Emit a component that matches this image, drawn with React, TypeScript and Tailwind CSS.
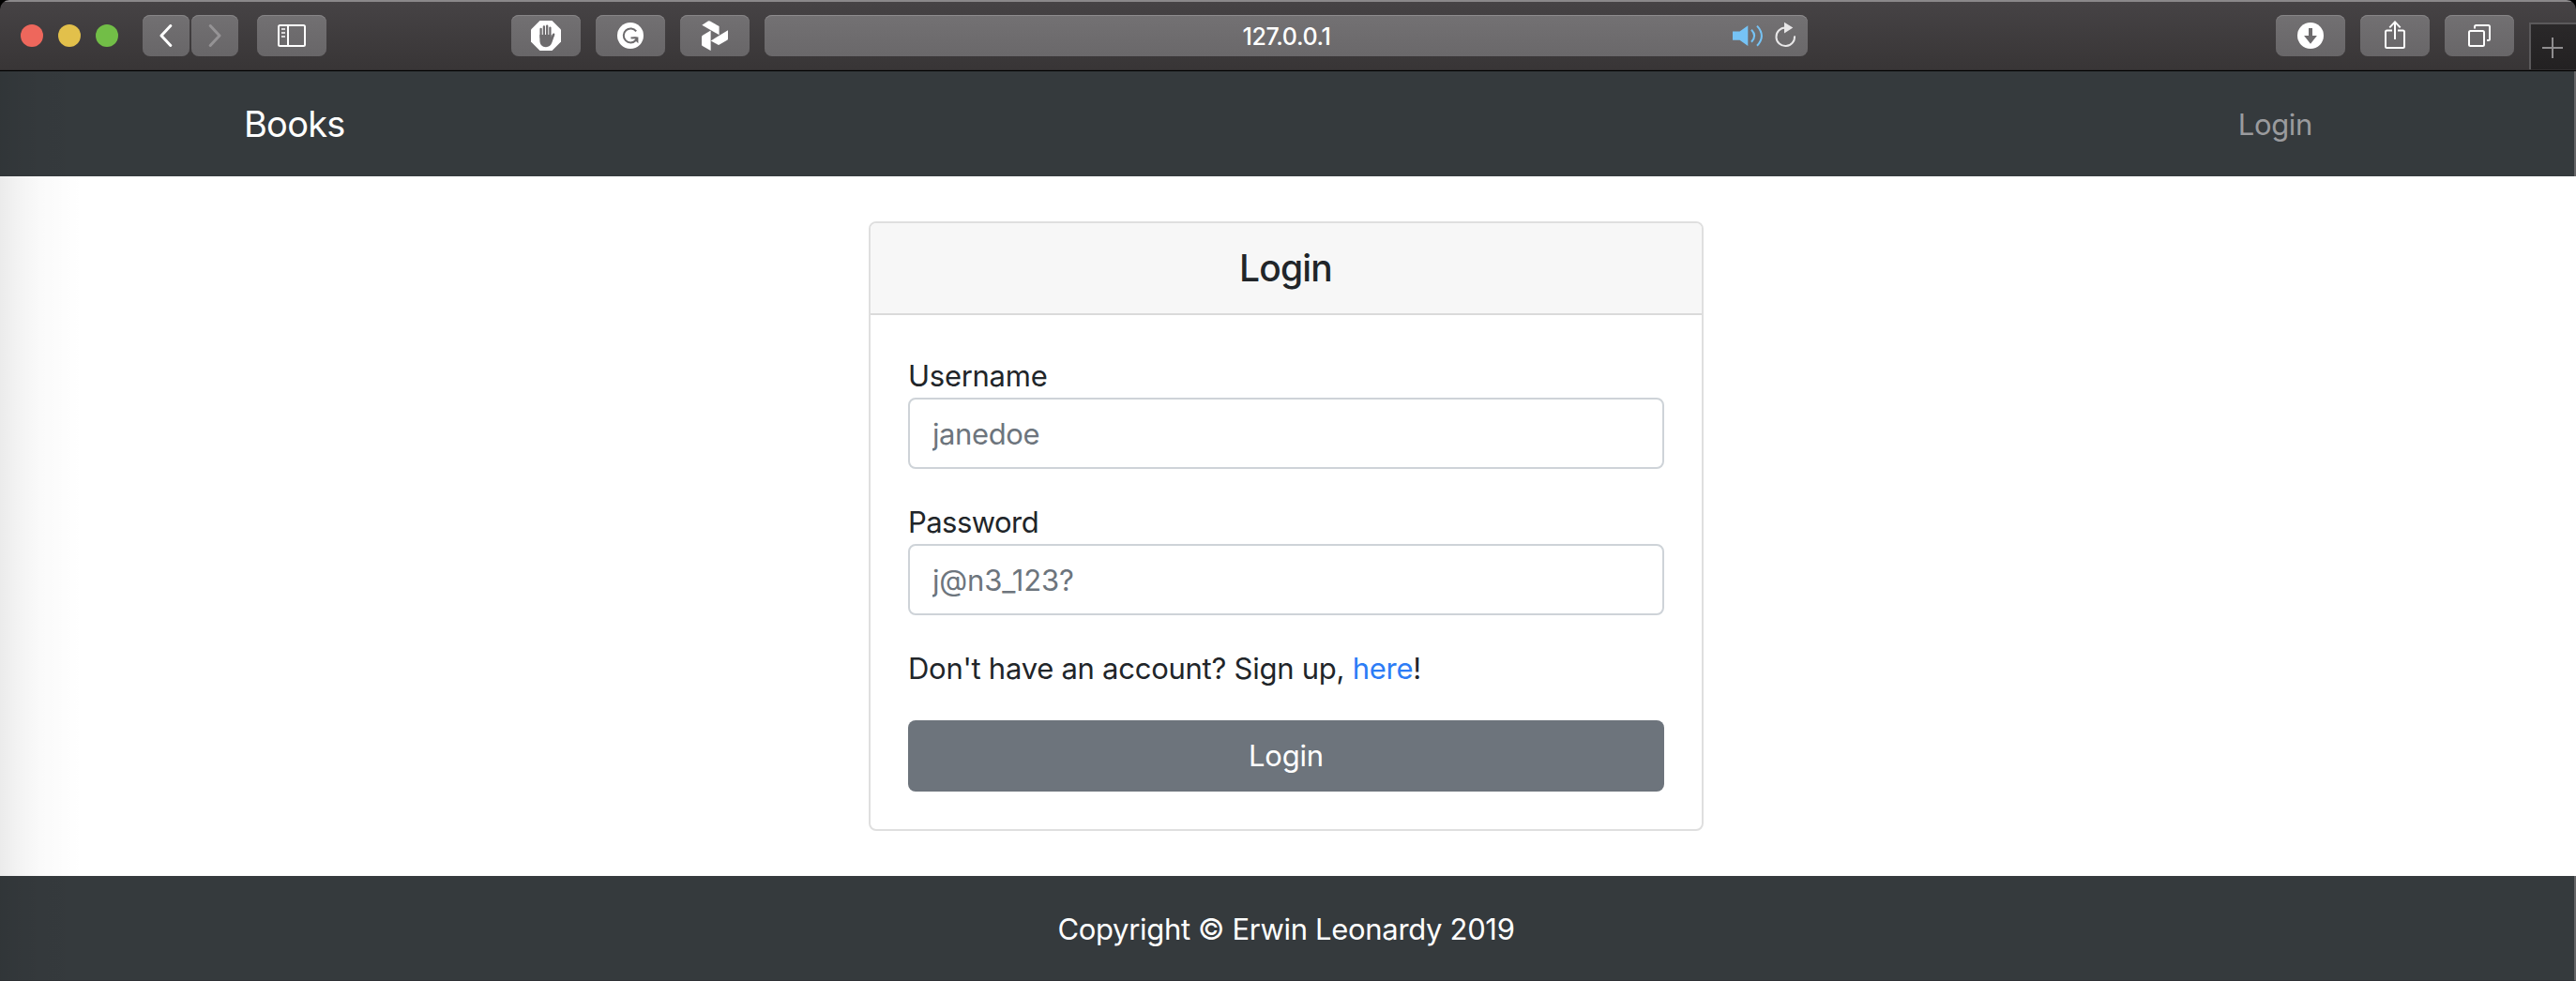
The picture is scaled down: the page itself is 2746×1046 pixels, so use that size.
import type { ReactNode } from "react";

function ToolButton({ label, className = "w-[74px]", children }: { label: string; className?: string; children: ReactNode }) {
  return (
    <button
      type="button"
      aria-label={label}
      className={`flex h-11 shrink-0 items-center justify-center rounded-lg bg-linear-to-b from-[#727072] to-[#686668] shadow-[inset_0_1px_0_#878587] ${className}`}
    >
      {children}
    </button>
  );
}

function TrafficLights() {
  return (
    <div className="mr-[26px] flex gap-4">
      <span className="size-6 rounded-full bg-[#ee675c]" />
      <span className="size-6 rounded-full bg-[#e2c04b]" />
      <span className="size-6 rounded-full bg-[#72be47]" />
    </div>
  );
}

function SidebarIcon() {
  return (
    <svg width="30" height="24" viewBox="0 0 30 24" fill="none" stroke="#fff" strokeWidth="2">
      <rect x="1" y="1" width="28" height="22" rx="1.5" />
      <path d="M11 1V23" />
      <path d="M4 5H8M4 9H8M4 13H8" stroke="#d8d7d8" strokeWidth="1.8" />
    </svg>
  );
}

function HandIcon() {
  return (
    <svg width="32" height="32" viewBox="0 0 32 32">
      <path d="M9.5 0H22.5L32 9.5V22.5L22.5 32H9.5L0 22.5V9.5Z" fill="#fff" />
      <g fill="none" stroke="#6d6b6d" strokeWidth="2.3" strokeLinecap="round">
        <path d="M10.6 8.8V18M13.9 6.3V17M17.2 5.6V17M20.4 7.6V18" />
        <path d="M24.2 14.6L21 21" />
      </g>
      <path d="M9.4 15H21.5V18.5L23.3 14.4L25.3 15L22.4 23.3C21.2 26.7 19 28.2 16 28.2C11.8 28.2 9.4 25.4 9.4 21Z" fill="#6d6b6d" />
    </svg>
  );
}

function GrammarIcon() {
  return (
    <svg width="28" height="28" viewBox="0 0 28 28">
      <circle cx="14" cy="14" r="14" fill="#fff" />
      <path d="M20.2 9.3A7.5 7.5 0 1 0 19.8 19" fill="none" stroke="#6d6b6d" strokeWidth="2" />
      <path d="M14.5 16.4H20.6" fill="none" stroke="#6d6b6d" strokeWidth="2" />
      <path d="M16.6 15.4H22.4V22.2L20.3 20.2L18.4 18.2L20 16.8Z" fill="#6d6b6d" />
    </svg>
  );
}

function PinwheelIcon() {
  return (
    <svg width="28" height="32" viewBox="0 0 28 32" fill="#fff">
      <path d="M0.3 4.8L6.8 0.6Q8 0 9.3 0.7L18.6 6V15.2Z" />
      <path d="M9.6 10.6V32L0.8 27Q0 26.5 0 25.5V17.5Q0 16.4 0.9 15.8Z" />
      <path d="M28 10.2V19.2Q28 20.2 27.2 20.7L19 25.6Q18 26.2 17 25.6L9.8 21.4Z" />
    </svg>
  );
}

function SpeakerIcon() {
  return (
    <svg width="34" height="24" viewBox="0 0 34 24" fill="none" stroke="#76c3f5" strokeWidth="2">
      <path d="M1 7.6H8.5L17.3 1.3V23L8.5 16.7H1Z" fill="#76c3f5" stroke="none" />
      <path d="M21 5.8Q27.3 12.2 21 18.7" />
      <path d="M27 1.6Q36.8 12.2 27 22.8" />
    </svg>
  );
}

function ReloadIcon() {
  return (
    <svg width="24" height="28" viewBox="0 0 24 28">
      <path d="M22 15.3A9.8 9.8 0 1 1 12.2 6.5" fill="none" stroke="#e8e7e8" strokeWidth="2" />
      <path d="M11 0.8L20.3 6.6L11 12.4Z" fill="#e8e7e8" />
    </svg>
  );
}

function Toolbar() {
  return (
    <header className="flex h-[76px] items-start border-t-2 border-b border-t-[#8a888a] border-b-black bg-linear-to-b from-[#464345] to-[#383536] shadow-[inset_0_-1px_0_#2f2d2e]">
      <div className="flex items-center pt-3.5 pl-[22px]">
        <TrafficLights />
        <ToolButton label="Back" className="mr-0.5 w-[50px]">
          <svg width="24" height="24" viewBox="0 0 24 24" fill="none" stroke="#fff" strokeWidth="3" strokeLinecap="round" strokeLinejoin="round">
            <path d="M16.8 1.5L7 12L16.8 22.5" />
          </svg>
        </ToolButton>
        <ToolButton label="Forward" className="mr-5 w-[50px]">
          <svg width="24" height="24" viewBox="0 0 24 24" fill="none" stroke="#959395" strokeWidth="3" strokeLinecap="round" strokeLinejoin="round">
            <path d="M7.2 1.5L17 12L7.2 22.5" />
          </svg>
        </ToolButton>
        <ToolButton label="Sidebar">
          <SidebarIcon />
        </ToolButton>
        <div className="ml-[197px] flex gap-4">
          <ToolButton label="Content blocker"><HandIcon /></ToolButton>
          <ToolButton label="Grammar"><GrammarIcon /></ToolButton>
          <ToolButton label="Extension"><PinwheelIcon /></ToolButton>
          <div className="grid h-11 w-[1112px] grid-cols-[1fr_auto_1fr] items-center rounded-lg bg-linear-to-b from-[#737173] to-[#6a686a] shadow-[inset_0_1px_0_#8d8b8d]">
            <span />
            <span className="pt-0.5 pl-px text-[25px] leading-[42px] tracking-[-0.4px] text-white [font-weight:460]">127.0.0.1</span>
            <div className="flex items-center justify-end gap-[11px] pr-3">
              <SpeakerIcon />
              <span className="-mt-0.5"><ReloadIcon /></span>
            </div>
          </div>
        </div>
      </div>
      <div className="ml-auto flex gap-4">
        <div className="flex gap-4 pt-3.5">
          <ToolButton label="Downloads">
            <svg width="28" height="28" viewBox="0 0 28 28">
              <circle cx="14" cy="14" r="14" fill="#fff" />
              <path d="M12 6H16V14H20.9L14 22.8L7.1 14H12Z" fill="#6d6b6d" />
            </svg>
          </ToolButton>
          <ToolButton label="Share">
            <svg width="24" height="32" viewBox="0 0 24 32" fill="none" stroke="#fff" strokeWidth="2">
              <path d="M9 10.5H3.5Q2 10.5 2 12V27.5Q2 29 3.5 29H20.5Q22 29 22 27.5V12Q22 10.5 20.5 10.5H15" />
              <path d="M12 1.5V20M6.3 7.4L12 1.4L17.7 7.4" />
            </svg>
          </ToolButton>
          <ToolButton label="Tabs">
            <svg width="26" height="26" viewBox="0 0 26 26" fill="none" stroke="#fff" strokeWidth="2">
              <rect x="2" y="8" width="16" height="16" rx="1.5" />
              <path d="M8 5.5V3.5Q8 2 9.5 2H22.5Q24 2 24 3.5V16.5Q24 18 22.5 18H21" />
            </svg>
          </ToolButton>
        </div>
        <button
          type="button"
          aria-label="New tab"
          className="mt-[22px] flex h-[50px] w-[50px] items-center justify-center border-t-2 border-l-2 border-[#5b595b] bg-linear-to-b from-[#2a2829] to-[#232122] pr-0.5"
        >
          <svg width="22" height="22" viewBox="0 0 22 22" stroke="#8f8d8f" strokeWidth="2" className="mt-0.5">
            <path d="M11 0V22M0 11H22" />
          </svg>
        </button>
      </div>
    </header>
  );
}

function Field({ id, label, placeholder, labelClass, inputClass }: { id: string; label: string; placeholder: string; labelClass: string; inputClass: string }) {
  return (
    <div className="mb-8">
      <label htmlFor={id} className={`block pt-0.5 leading-[46px] ${labelClass}`}>{label}</label>
      <input
        id={id}
        type="text"
        placeholder={placeholder}
        className={`block h-[76px] w-full rounded-lg border-2 border-[#ced3d8] bg-white px-6 placeholder:text-[#6d757d] placeholder:opacity-100 ${inputClass}`}
      />
    </div>
  );
}

export default function App() {
  return (
    <div className="h-[1046px] w-[2746px] overflow-hidden bg-black font-[Inter,'Liberation_Sans',sans-serif] text-[31px] text-[#212529] [font-weight:440]">
      <div className="flex h-full flex-col overflow-hidden rounded-t-[10px]">
        <Toolbar />
        <div className="relative flex flex-1 flex-col bg-white">
          <nav className="flex h-28 items-center justify-between border-r-2 border-[#656567] bg-[#353a3d] pr-[279px] pl-[260px]">
            <a className="text-[38px] leading-[60px] tracking-[-0.75px] text-white">Books</a>
            <a className="pt-0.5 leading-[46px] tracking-[-0.35px] text-[#9a9b9e]">Login</a>
          </nav>

          <main className="flex flex-1 justify-center py-12 pr-1">
            <section className="flex w-[890px] flex-col rounded-lg border-2 border-[#dfdfdf] bg-white">
              <h1 className="flex h-[98px] items-center justify-center rounded-t-md border-b-2 border-[#dadada] bg-[#f7f7f7] pr-px text-[39px] tracking-[-0.8px] [font-weight:540]">
                Login
              </h1>
              <form className="p-10">
                <Field id="username" label="Username" placeholder="janedoe" labelClass="tracking-[-0.27px]" inputClass="tracking-[-0.4px]" />
                <Field id="password" label="Password" placeholder="j@n3_123?" labelClass="tracking-[-0.55px]" inputClass="tracking-[-0.18px]" />
                <p className="mb-8 pt-0.5 leading-[46px] tracking-[-0.26px]">
                  Don't have an account? Sign up, <a className="text-[#2c7cf6]">here</a>!
                </p>
                <button type="button" className="block h-[76px] w-full rounded-lg bg-[#6d747c] tracking-[-0.2px] text-white">
                  Login
                </button>
              </form>
            </section>
          </main>

          <footer className="flex h-28 items-center justify-center border-r-2 border-b border-r-[#656567] border-b-[#2f3236] bg-[#353a3d] pt-0.5 pr-0.5 leading-[46px] tracking-[-0.32px] text-white">
            Copyright © Erwin Leonardy 2019
          </footer>

          {/* soft shadow along the left window edge */}
          <div className="pointer-events-none absolute inset-y-0 left-0 w-[88px] bg-linear-[90deg,rgba(0,0,0,0.08)_0%,rgba(0,0,0,0.045)_25%,rgba(0,0,0,0.018)_50%,rgba(0,0,0,0)_100%]" />
        </div>
      </div>
    </div>
  );
}
